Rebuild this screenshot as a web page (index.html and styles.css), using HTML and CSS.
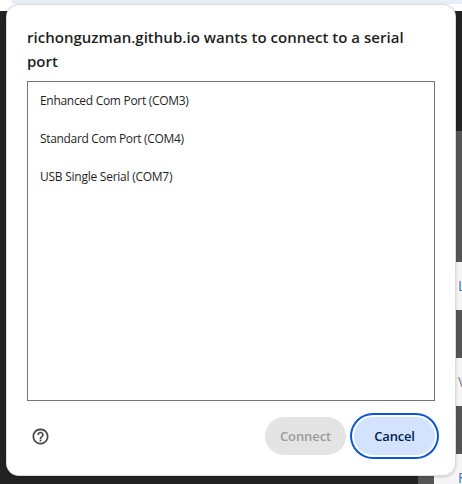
FILE: index.html
```html
<!DOCTYPE html>
<html lang="en">
<head>
<meta charset="utf-8">
<title>Serial port chooser</title>
<link rel="stylesheet" href="styles.css">
</head>
<body>
<div class="page">
  <div class="toolbar"><div class="toolbar-fill"></div></div>
  <div class="content">
    <div class="backdrop"></div>
    <div class="gutter"></div>
    <div class="sidebar">
      <div class="band header"></div>
      <div class="band hero"></div>
      <div class="row"><span class="link">L</span></div>
      <div class="row shade"></div>
      <div class="row"><span class="plain">V</span></div>
      <div class="row shade"></div>
      <div class="row"><span class="link">F</span></div>
    </div>
  </div>
</div>
<section class="dialog" role="dialog">
  <h1 class="title"><span class="line">richonguzman.github.io wants to connect to a serial</span> port</h1>
  <ul class="ports">
    <li class="port first">Enhanced Com Port (COM3)</li>
    <li class="port second">Standard Com Port (COM4)</li>
    <li class="port third">USB Single Serial (COM7)</li>
  </ul>
  <footer class="actions">
    <svg class="help" viewBox="0 0 24 24"><path d="M11 18h2v-2h-2v2zm1-16C6.48 2 2 6.48 2 12s4.48 10 10 10 10-4.480 10-10S17.520 2 12 2zm0 18c-4.410 0-8-3.590-8-8s3.590-8 8-8 8 3.590 8 8-3.590 8-8 8zm0-14c-2.210 0-4 1.790-4 4h2c0-1.100.9-2 2-2s2 .9 2 2c0 2-3 1.750-3 5h2c0-2.250 3-2.500 3-5 0-2.210-1.790-4-4-4z"/></svg>
    <button class="button connect" disabled>Connect</button>
    <button class="button cancel">Cancel</button>
  </footer>
</section>
</body>
</html>
```

FILE: styles.css
```css
* { box-sizing: border-box; }
body {
  margin: 0;
  width: 462px;
  height: 484px;
  overflow: hidden;
  font-family: "Open Sans", "Noto Sans", sans-serif;
  color: #1f1f1f;
}
.page { display: flex; flex-direction: column; height: 484px; overflow: hidden; }
.toolbar { flex: none; height: 11px; background: #fff; }
.toolbar-fill { height: 4px; margin-left: 11px; background: #e9eef9; border-bottom-left-radius: 4px; }
.content { flex: none; height: 473px; display: flex; overflow: hidden; }
.backdrop { width: 418px; background: #222; }
.gutter { width: 16px; background: #555; }
.sidebar { width: 28px; background: #f5f5f7; }
.header { height: 120px; background: #222424; }
.hero { height: 131px; background: #555; }
.row { height: 48px; padding-left: 24px; line-height: 48px; font-size: 14px; overflow: hidden; }
.shade { background: #555; }
.link { color: #337ab7; }
.plain { color: #777; }

.dialog {
  position: absolute;
  left: 7px;
  top: 5px;
  width: 448px;
  height: 470px;
  padding: 20px 20px 0;
  border-radius: 12px;
  background: #fff;
  box-shadow: 0 0 0 1px #dedede, 0 1px 3px 1px rgba(0, 0, 0, .18);
}
.title { margin: 0; font-size: 15px; line-height: 24px; font-weight: 560; letter-spacing: .025px; }
.line { display: block; white-space: nowrap; }
.ports {
  list-style: none;
  margin: 8px 0 0;
  padding: 0 0 0 12px;
  width: 408px;
  height: 320px;
  border: 1px solid #757575;
}
.port { height: 38px; line-height: 38px; font-size: 12px; white-space: nowrap; }
.first { letter-spacing: -.3px; }
.second { letter-spacing: -.33px; }
.third { letter-spacing: -.25px; }
.actions { display: flex; align-items: center; margin-top: 16px; height: 38px; }
.help { width: 19px; height: 19px; margin-left: 4px; fill: #474747; stroke: #474747; stroke-width: .2; }
.button {
  height: 38px;
  padding: 0;
  border: 0;
  border-radius: 19px;
  font: 600 13px/38px "Open Sans", "Noto Sans", sans-serif;
  letter-spacing: -.2px;
}
.connect { width: 81px; margin-left: 215px; background: #e4e4e4; color: #9b9b9b; letter-spacing: -.35px; font-size: 13px; letter-spacing: -.1px; }
.cancel { width: 81px; margin-left: 8px; background: #d3e3fd; color: #001d4f; box-shadow: 0 0 0 2px #fff, 0 0 0 4px #0b57d0; }
```
